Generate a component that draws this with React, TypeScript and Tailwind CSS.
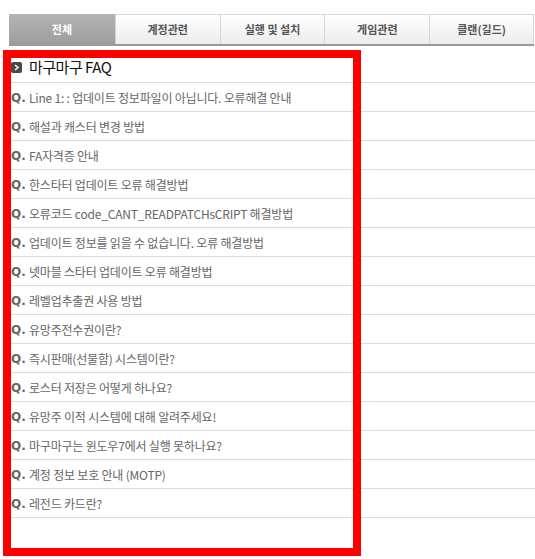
import React from 'react';

const tabs = ['전체', '계정관련', '실행 및 설치', '게임관련', '클랜(길드)'];

const faqs = [
  'Line 1: : 업데이트 정보파일이 아닙니다. 오류해결 안내',
  '해설과 캐스터 변경 방법',
  'FA자격증 안내',
  '한스타터 업데이트 오류 해결방법',
  '오류코드 code_CANT_READPATCHsCRIPT 해결방법',
  '업데이트 정보를 읽을 수 없습니다. 오류 해결방법',
  '넷마블 스타터 업데이트 오류 해결방법',
  '레벨업추출권 사용 방법',
  '유망주전수권이란?',
  '즉시판매(선물함) 시스템이란?',
  '로스터 저장은 어떻게 하나요?',
  '유망주 이적 시스템에 대해 알려주세요!',
  '마구마구는 윈도우7에서 실행 못하나요?',
  '계정 정보 보호 안내 (MOTP)',
  '레전드 카드란?',
];

const font = { fontFamily: '"Noto Sans CJK KR", "Noto Sans", sans-serif' };

function ArrowIcon() {
  return (
    <span className="flex h-[11px] w-[11px] items-center justify-center rounded-[2px] bg-[#4a4a4a]">
      <svg width="7" height="7" viewBox="0 0 7 7">
        <path d="M2 1 L5 3.5 L2 6" stroke="#fff" strokeWidth="1.4" fill="none" />
      </svg>
    </span>
  );
}

export default function App() {
  return (
    <div className="relative h-[559px] w-[535px] overflow-hidden bg-white" style={font}>
      {/* tabs */}
      <div className="ml-[9px] mt-[14px] flex w-[525px] border-b-2 border-[#9a9a9a]">
        {tabs.map((t, i) => (
          <div
            key={t}
            className={
              i === 0
                ? 'flex h-[30px] w-[106px] items-center justify-center bg-gradient-to-b from-[#b4b4b4] to-[#9d9d9d] text-[11px] font-bold text-white'
                : 'flex h-[30px] w-[105px] items-center justify-center border-l border-t border-[#d6d6d6] bg-gradient-to-b from-[#ffffff] to-[#ececec] text-[11px] font-bold text-[#555] last:border-r'
            }
          >
            {t}
          </div>
        ))}
      </div>

      {/* faq list */}
      <div className="ml-[3px] w-[532px]">
        <div className="flex h-[37px] items-center gap-[7px] border-b border-[#d9d9d9] pl-[8px] pt-[7px]">
          <ArrowIcon />
          <span className="text-[15px] font-normal tracking-[-0.5px] text-[#111]">마구마구 FAQ</span>
        </div>
        {faqs.map((q) => (
          <div key={q} className="flex h-[29px] items-center border-b border-[#dcdcdc] pl-[8px] pt-[2px]">
            <span
              className="w-[18px] text-[12px] font-bold text-[#666]"
              style={{ fontFamily: '"DejaVu Sans", sans-serif' }}
            >
              Q.
            </span>
            <span className="text-[12px] tracking-[-0.2px] text-[#666]">{q}</span>
          </div>
        ))}
      </div>

      {/* red highlight overlay */}
      <div className="absolute left-[3px] top-[50px] h-[506px] w-[358px] border-[8px] border-[#ff0000]" />
    </div>
  );
}
